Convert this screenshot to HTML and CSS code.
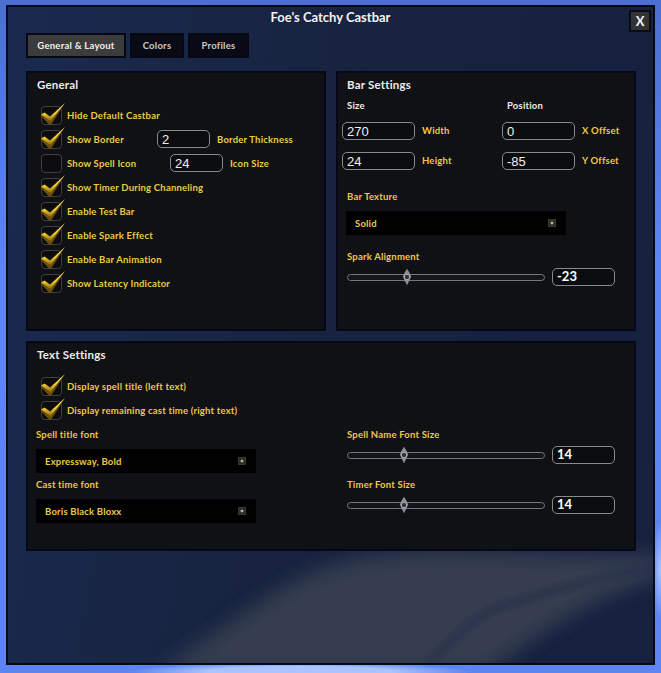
FILE: index.html
```html
<!DOCTYPE html>
<html lang="en">
<head>
<meta charset="utf-8">
<title>Foe's Catchy Castbar</title>
<link rel="stylesheet" href="styles.css">
</head>
<body>
<svg class="sprites" width="0" height="0" aria-hidden="true">
  <defs>
    <linearGradient id="gold" x1="0" y1="0" x2="0" y2="1">
      <stop offset="0" stop-color="#fff27a"/>
      <stop offset="0.6" stop-color="#f2c826"/>
      <stop offset="1" stop-color="#8a6510"/>
    </linearGradient>
    <symbol id="check" viewBox="0 0 26 22">
      <path d="M0.5 12.5 L5 11 L10 15.5 L25 0 L11.5 21 L9 21.5 Z" fill="#6b4f10"/>
      <path d="M1 11.5 L4.5 9.5 L10 13.5 L25 0 L10.5 18 Z" fill="url(#gold)"/>
    </symbol>
    <symbol id="thumb" viewBox="0 0 12 20">
      <path d="M6 0 L9 5 L11 9.5 L9 14 L6 20 L3 14 L1 9.5 L3 5 Z" fill="#8d8f96"/>
      <circle cx="6" cy="10" r="3.2" fill="#2a2f45" stroke="#b9bbc2" stroke-width="1"/>
    </symbol>
    <symbol id="arrow" viewBox="0 0 8 8">
      <path d="M0.5 0.5 V7.5 H7.5 V0.5 Z" fill="#2b2b24" stroke="#55534a" stroke-width="0.6"/>
      <path d="M4 2 L4.7 3.4 L6.2 4 L4.7 4.6 L4 6 L3.3 4.6 L1.8 4 L3.3 3.4 Z" fill="#d8d4c0"/>
    </symbol>
  </defs>
</svg>
<main class="window">
  <svg class="swoosh" viewBox="0 0 649 660" preserveAspectRatio="none" aria-hidden="true">
    <defs>
      <filter id="soft" x="-20%" y="-20%" width="140%" height="140%"><feGaussianBlur stdDeviation="10"/></filter>
      <filter id="softer"><feGaussianBlur stdDeviation="3"/></filter>
    </defs>
    <path d="M150 670 C215 625 265 590 300 572 C345 552 400 545 470 548 L660 552 L660 574 C610 585 570 610 530 635 L480 670 Z" fill="#363c50" filter="url(#soft)"/>
    <path d="M425 655 C450 640 465 615 490 605 C540 590 600 570 649 565" fill="none" stroke="#1d2748" stroke-width="3" filter="url(#softer)"/>
  </svg>
  <header class="title-bar">
    <h1 class="title">Foe's Catchy Castbar</h1>
    <button class="close">X</button>
  </header>
  <nav class="tabs">
    <span class="tab tab-active">General &amp; Layout</span>
    <span class="tab tab-colors">Colors</span>
    <span class="tab tab-profiles">Profiles</span>
  </nav>
  <div class="panels">
    <section class="panel panel-general">
      <h2 class="panel-title">General</h2>
      <div class="check-list">
        <div class="row"><span class="box"><svg class="tick"><use href="#check"/></svg></span><span class="label">Hide Default Castbar</span></div>
        <div class="row"><span class="box"><svg class="tick"><use href="#check"/></svg></span><span class="label label-fixed-a">Show Border</span><span class="input input-sm">2</span><span class="label">Border Thickness</span></div>
        <div class="row"><span class="box"></span><span class="label label-fixed-b">Show Spell Icon</span><span class="input input-sm">24</span><span class="label">Icon Size</span></div>
        <div class="row"><span class="box"><svg class="tick"><use href="#check"/></svg></span><span class="label">Show Timer During Channeling</span></div>
        <div class="row"><span class="box"><svg class="tick"><use href="#check"/></svg></span><span class="label">Enable Test Bar</span></div>
        <div class="row"><span class="box"><svg class="tick"><use href="#check"/></svg></span><span class="label">Enable Spark Effect</span></div>
        <div class="row"><span class="box"><svg class="tick"><use href="#check"/></svg></span><span class="label">Enable Bar Animation</span></div>
        <div class="row"><span class="box"><svg class="tick"><use href="#check"/></svg></span><span class="label">Show Latency Indicator</span></div>
      </div>
    </section>
    <section class="panel panel-bar">
      <h2 class="panel-title">Bar Settings</h2>
      <div class="size-grid">
        <span class="sub">Size</span><span class="sub sub-pos">Position</span>
        <div class="pair"><span class="input input-lg">270</span><span class="label">Width</span></div>
        <div class="pair"><span class="input input-lg">0</span><span class="label">X Offset</span></div>
        <div class="pair"><span class="input input-lg">24</span><span class="label">Height</span></div>
        <div class="pair"><span class="input input-lg">-85</span><span class="label">Y Offset</span></div>
      </div>
      <div class="label field-label tex-label">Bar Texture</div>
      <div class="dropdown dropdown-bar"><span>Solid</span><svg class="arrow"><use href="#arrow"/></svg></div>
      <div class="label field-label spark-label">Spark Alignment</div>
      <div class="slider-row"><div class="track"><svg class="thumb thumb-spark"><use href="#thumb"/></svg></div><span class="input value">-23</span></div>
    </section>
    <section class="panel panel-text">
      <h2 class="panel-title">Text Settings</h2>
      <div class="check-list check-list-text">
        <div class="row"><span class="box"><svg class="tick"><use href="#check"/></svg></span><span class="label">Display spell title (left text)</span></div>
        <div class="row"><span class="box"><svg class="tick"><use href="#check"/></svg></span><span class="label">Display remaining cast time (right text)</span></div>
      </div>
      <div class="text-grid">
        <div class="text-col">
          <div class="label field-label">Spell title font</div>
          <div class="dropdown"><span>Expressway, Bold</span><svg class="arrow"><use href="#arrow"/></svg></div>
          <div class="label field-label field-next">Cast time font</div>
          <div class="dropdown"><span>Boris Black Bloxx</span><svg class="arrow"><use href="#arrow"/></svg></div>
        </div>
        <div class="text-col text-col-right">
          <div class="label field-label">Spell Name Font Size</div>
          <div class="slider-row"><div class="track"><svg class="thumb"><use href="#thumb"/></svg></div><span class="input value">14</span></div>
          <div class="label field-label field-next-slider">Timer Font Size</div>
          <div class="slider-row"><div class="track"><svg class="thumb"><use href="#thumb"/></svg></div><span class="input value">14</span></div>
        </div>
      </div>
    </section>
  </div>
</main>
</body>
</html>
```

FILE: styles.css
```css
* { box-sizing: border-box; }
html, body { margin: 0; height: 100%; }
body {
  width: 661px;
  height: 673px;
  overflow: hidden;
  padding: 5px 6px 8px 6px;
  background:
    radial-gradient(ellipse 170px 10px at 300px 672px, #a9c4ff 0%, #a9c4ff 55%, rgba(169,196,255,0) 100%),
    radial-gradient(ellipse 8px 50px at 660px 570px, #a6c2ff 0%, rgba(166,194,255,0) 100%),
    linear-gradient(180deg, #4b6fd0 0%, #5c86f6 40%, #5c84f2 100%);
  font-family: Lato, "Liberation Sans", sans-serif;
}
.sprites { position: absolute; }

.window {
  position: relative;
  width: 649px;
  height: 660px;
  border: 2px solid #05081c;
  background: linear-gradient(100deg, #1a2a50 0%, #17233f 45%, #16203f 100%);
  overflow: hidden;
  padding: 0 18px 0 18px;
}
.swoosh { position: absolute; inset: 0; width: 100%; height: 100%; }
.title-bar, .tabs, .panels { position: relative; }

.title-bar { height: 20px; display: flex; justify-content: center; align-items: center; }
.title {
  margin: 0;
  font-size: 13px;
  font-weight: 700;
  letter-spacing: 0;
  color: #f2f2f2;
}
.close {
  position: absolute;
  right: -16px;
  top: 3px;
  width: 22px;
  height: 22px;
  padding: 0;
  border: 2px solid #090c16;
  background: #343434;
  color: #f4f4f4;
  font: 700 13px Lato, sans-serif;
}

.tabs { display: flex; gap: 4px; height: 44px; padding-top: 6px; }
.tab {
  display: flex;
  align-items: center;
  justify-content: center;
  height: 25px;
  background: #080b16;
  border: 2px solid #060914;
  color: #c9c9c9;
  font-size: 9.5px;
  font-weight: 700;
  letter-spacing: 0.25px;
  white-space: nowrap;
}
.tab-active { width: 100px; background: #3c3c3c; color: #efefef; border-color: #060914; }
.tab-colors { width: 54px; }
.tab-profiles { width: 61px; }

.panels {
  display: grid;
  grid-template-columns: 300px 300px;
  grid-template-rows: 260px 210px;
  gap: 10px;
}
.panel {
  background: #101114;
  border: 2px solid #050818;
  padding: 4px 9px 0 9px;
}
.panel-text { grid-column: 1 / 3; }
.panel-title {
  margin: 0;
  height: 15px;
  line-height: 15px;
  font-size: 11.5px;
  font-weight: 700;
  letter-spacing: 0.2px;
  color: #ececec;
}

.label {
  font-size: 9.5px;
  font-weight: 700;
  letter-spacing: 0.2px;
  color: #ecc945;
  white-space: nowrap;
}
.check-list { margin-top: 11px; margin-left: 4px; }
.check-list-text { margin-top: 12px; }
.row {
  display: flex;
  align-items: center;
  height: 24px;
}
.box {
  position: relative;
  flex: none;
  width: 21px;
  height: 19px;
  margin-right: 5px;
  border: 1px solid #3f3f3d;
  border-radius: 4px;
  background: #0c0c0e;
}
.tick {
  position: absolute;
  left: -2px;
  top: -4px;
  width: 26px;
  height: 22px;
  overflow: visible;
}
.label-fixed-a { width: 90px; }
.label-fixed-b { width: 103px; }
.input {
  display: flex;
  align-items: center;
  flex: none;
  padding-left: 4px;
  height: 18px;
  border: 1px solid #8a8a8a;
  border-radius: 5px;
  background: #0b0c0f;
  color: #f0f0f0;
  font-family: "Liberation Sans", sans-serif;
  font-size: 13px;
}
.input-sm { width: 53px; margin-right: 7px; }
.input-lg { width: 73px; margin-right: 7px; }

.size-grid {
  display: grid;
  grid-template-columns: 160px 120px;
  grid-template-rows: 19px 30px 30px;
  margin-left: -5px;
  margin-top: 4px;
}
.sub { font-size: 9.5px; font-weight: 700; letter-spacing: 0.2px; color: #ececec; padding-left: 5px; align-self: center; }
.sub-pos { padding-left: 5px; }
.pair { display: flex; align-items: center; margin-top: 2px; }
.pair .label { margin-bottom: 2px; }

.field-label { height: 14px; line-height: 14px; }
.tex-label { margin-top: 15px; }
.spark-label { margin-top: 15px; }
.dropdown {
  display: flex;
  align-items: center;
  justify-content: space-between;
  width: 220px;
  height: 24px;
  margin-top: 7px;
  padding: 0 10px 0 9px;
  background: #010101;
  color: #ecc945;
  font-size: 9.5px;
  font-weight: 700;
  letter-spacing: 0.2px;
}
.dropdown-bar { margin-left: -1px; }
.arrow { width: 8px; height: 8px; }

.slider-row { display: flex; align-items: center; gap: 7px; height: 18px; margin-top: 4px; }
.track {
  position: relative;
  width: 198px;
  height: 7px;
  border: 1px solid #77787c;
  border-radius: 4px;
  background: #14151a;
}
.thumb {
  position: absolute;
  left: 51px;
  top: -7px;
  width: 10px;
  height: 18px;
}
.thumb-spark { left: 54px; }
.value {
  width: 63px;
  padding-bottom: 2px;
  color: #fff;
  font-family: Lato, sans-serif;
  font-weight: 700;
  font-size: 13px;
}

.text-grid {
  display: grid;
  grid-template-columns: 310px 290px;
  margin-top: 6px;
}
.text-col { display: flex; flex-direction: column; align-items: flex-start; margin-left: -1px; }
.text-col-right { margin-left: 0; }
.field-next { margin-top: 5px; }
.field-next-slider { margin-top: 14px; }
```
